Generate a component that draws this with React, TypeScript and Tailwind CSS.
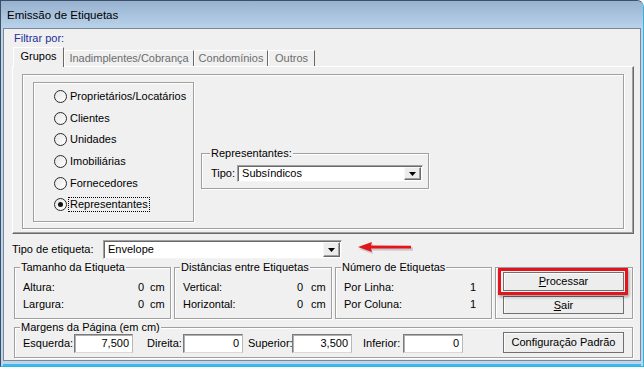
import React from 'react';

const font = "font-['Liberation_Sans',Arial,sans-serif]";

function GroupBox({ label, className = '', labelLeft = 'left-[5px]', children }: { label?: string; className?: string; labelLeft?: string; children?: React.ReactNode }) {
    return (
        <div className={`relative shrink-0 border border-[#a0a0a0] shadow-[inset_1px_1px_0_#fff,1px_1px_0_#fff] ${className}`}>
            {label && (
                <span className={`absolute -top-[7px] ${labelLeft} bg-[#f0f0f0] px-[1px] leading-[13px] whitespace-nowrap`}>{label}</span>
            )}
            {children}
        </div>
    );
}

function Radio({ label, checked = false, focused = false }: { label: string; checked?: boolean; focused?: boolean }) {
    return (
        <div className="h-[21.6px] flex items-center">
            <div className="w-[13px] h-[13px] rounded-full border-[1.5px] border-[#2a2a2a] bg-gradient-to-br from-[#e6e6e6] to-white flex items-center justify-center shrink-0">
                {checked && <div className="w-[5px] h-[5px] rounded-full bg-[#111]" />}
            </div>
            <span className={`ml-[2px] px-[1px] leading-[13px] ${focused ? 'outline outline-1 outline-dotted outline-black' : ''}`}>{label}</span>
        </div>
    );
}

function DropButton({ className = '' }: { className?: string }) {
    return (
        <div className={`h-full bg-[#ececec] border border-t-[#f8f8f8] border-l-[#f8f8f8] border-r-[#696969] border-b-[#696969] shadow-[inset_-1px_-1px_0_#a0a0a0] flex items-center justify-center ${className}`}>
            <svg width="7" height="4" viewBox="0 0 7 4"><path d="M0 0h7L3.5 4z" fill="#000" /></svg>
        </div>
    );
}

function Combo({ value, className = '' }: { value: string; className?: string }) {
    return (
        <div className={`shrink-0 bg-white border border-t-[#a0a0a0] border-l-[#a0a0a0] border-r-[#f4f4f4] border-b-[#f4f4f4] shadow-[inset_1px_1px_0_#696969] flex items-stretch p-[1px] pl-[2px] ${className}`}>
            <span className="flex-1 flex items-center pl-[2px]">{value}</span>
            <DropButton className="w-[17px]" />
        </div>
    );
}

function Field({ value, className = '' }: { value: string; className?: string }) {
    return (
        <div className={`shrink-0 h-[19px] bg-white border border-t-[#7a7a7a] border-l-[#7a7a7a] border-r-[#b8b8b8] border-b-[#d8d8d8] shadow-[inset_1px_1px_0_#b0b0b0] flex items-center justify-end pr-[3px] ${className}`}>
            {value}
        </div>
    );
}

function WinButton({ children, className = '' }: { children: React.ReactNode; className?: string }) {
    return (
        <div className={`shrink-0 bg-[#ededed] border border-[#707070] shadow-[inset_1px_1px_0_#fcfcfc] flex items-center justify-center ${className}`}>
            {children}
        </div>
    );
}

function InfoRow({ label, value, unit, valueClass = '' }: { label: string; value: string; unit?: string; valueClass?: string }) {
    return (
        <div className="h-[17px] flex items-center pl-[8px]">
            <span className="flex-1">{label}</span>
            <span className={valueClass}>{value}</span>
            {unit && <span className="ml-[6px] w-[20px]">{unit}</span>}
        </div>
    );
}

export default function App() {
    return (
        <div className={`w-[644px] h-[367px] flex flex-col bg-[#bcd4ec] border border-[#3d5066] border-r-[#2fb4e4] border-b-[#2fb4e4] rounded-tr-[7px] overflow-hidden text-[11px] leading-[13px] text-black ${font}`}>
            {/* title bar */}
            <div className="h-[27px] shrink-0 flex items-center pl-[6px] pt-[1px] bg-gradient-to-b from-[#97b2cf] to-[#bad2eb] text-[11.5px]">
                Emissão de Etiquetas
            </div>

            {/* client area */}
            <div className="ml-[2px] w-[638px] h-[333px] shrink-0 border border-[#7d8894] bg-[#f0f0f0] flex flex-col shadow-[0_3px_0_#bcd4ec,0_5px_0_#3bbbe8]">
                <div className="h-[18px] shrink-0 pl-[10px] pt-[3px] text-[#22319a]">Filtrar por:</div>

                {/* tabs */}
                <div className="h-[19px] shrink-0 ml-[9px] flex items-end relative z-10">
                    <div className="h-[20px] w-[51px] -mb-[1px] bg-[#f0f0f0] border-t border-l border-white border-r border-r-[#696969] flex items-center justify-center pb-[2px]">Grupos</div>
                    <div className="h-[16px] w-[130px] border-t border-l border-white border-r border-r-[#696969] flex items-center justify-center text-[#6d6d6d]">Inadimplentes/Cobrança</div>
                    <div className="h-[16px] w-[74px] border-t border-l border-white border-r border-r-[#696969] flex items-center justify-center text-[#6d6d6d]">Condomínios</div>
                    <div className="h-[16px] w-[47px] border-t border-l border-white border-r border-r-[#696969] flex items-center justify-center text-[#6d6d6d]">Outros</div>
                </div>

                {/* tab page */}
                <div className="ml-[8px] w-[622px] h-[168px] shrink-0 border border-t-white border-l-white border-r-[#696969] border-b-[#696969] shadow-[inset_-1px_-1px_0_#a0a0a0] pt-[7px] pl-[9px]">
                    <GroupBox className="w-[602px] h-[155px] flex items-start">
                        <GroupBox className="ml-[10px] mt-[7px] w-[161px] h-[140px] pt-[3px] pl-[20px]">
                            <Radio label="Proprietários/Locatários" />
                            <Radio label="Clientes" />
                            <Radio label="Unidades" />
                            <Radio label="Imobiliárias" />
                            <Radio label="Fornecedores" />
                            <Radio label="Representantes" checked focused />
                        </GroupBox>
                        <GroupBox label="Representantes:" labelLeft="left-[8px]" className="ml-[7px] mt-[78px] w-[228px] h-[36px] pt-[11px] pl-[9px] flex items-start">
                            <span className="h-[17px] flex items-center">Tipo:</span>
                            <Combo value="Subsíndicos" className="ml-[2px] w-[186px] h-[17px]" />
                        </GroupBox>
                    </GroupBox>
                </div>

                {/* tipo de etiqueta */}
                <div className="mt-[6px] h-[19px] shrink-0 pl-[8px] flex items-center">
                    <span className="w-[91px]">Tipo de etiqueta:</span>
                    <Combo value="Envelope" className="w-[239px] h-[19px]" />
                    <svg width="60" height="14" viewBox="0 0 60 14" className="ml-[14px] -mt-[4px]">
                        <path d="M3 8 L17 3 L16 6.5 L57 6.3 L57 9.7 L16 9.5 L17 13 Z" fill="#9a9a9a" opacity="0.45" />
                        <path d="M2 6 L16 1 L15 4.6 L55 4.8 L55 7.4 L15 7.6 L16 11 Z" fill="#e3141b" />
                    </svg>
                </div>

                {/* info groups */}
                <div className="mt-[8px] h-[52px] shrink-0 ml-[10px] flex gap-[3px]">
                    <GroupBox label="Tamanho da Etiqueta" className="w-[157px] h-[52px] pt-[11px]">
                        <InfoRow label="Altura:" value="0" unit="cm" />
                        <InfoRow label="Largura:" value="0" unit="cm" />
                    </GroupBox>
                    <GroupBox label="Distâncias entre Etiquetas" className="w-[158px] h-[52px] pt-[11px]">
                        <InfoRow label="Vertical:" value="0" unit="cm" valueClass="mr-[2px]" />
                        <InfoRow label="Horizontal:" value="0" unit="cm" valueClass="mr-[2px]" />
                    </GroupBox>
                    <GroupBox label="Número de Etiquetas" className="w-[157px] h-[52px] pt-[11px]">
                        <InfoRow label="Por Linha:" value="1" valueClass="mr-[15px]" />
                        <InfoRow label="Por Coluna:" value="1" valueClass="mr-[15px]" />
                    </GroupBox>
                    <GroupBox className="w-[138px] h-[52px] pt-[4px] pl-[7px]">
                        <div className="relative w-[121px]">
                            <WinButton className="w-[121px] h-[19px] border-[#4a4a4a]">
                                <span><span className="underline">P</span>rocessar</span>
                            </WinButton>
                            <div className="absolute -left-[5px] -top-[4px] -right-[4px] -bottom-[4px] border-[3px] border-[#e3141b] shadow-[1px_2px_3px_rgba(0,0,0,0.35)]" />
                        </div>
                        <WinButton className="mt-[5px] w-[121px] h-[18px]">
                            <span><span className="underline">S</span>air</span>
                        </WinButton>
                    </GroupBox>
                </div>

                {/* margens */}
                <GroupBox label="Margens da Página (em cm)" className="mt-[8px] ml-[10px] w-[619px] h-[31px] pt-[1px] pl-[8px] flex items-center">
                    <span className="w-[51px]">Esquerda:</span>
                    <Field value="7,500" className="w-[59px]" />
                    <span className="ml-[14px] w-[36px]">Direita:</span>
                    <Field value="0" className="w-[60px]" />
                    <span className="ml-[5px] w-[44px]">Superior:</span>
                    <Field value="3,500" className="w-[60px]" />
                    <span className="ml-[11px] w-[40px]">Inferior:</span>
                    <Field value="0" className="w-[60px]" />
                    <WinButton className="ml-[40px] -mt-[2px] w-[121px] h-[21px]">Configuração Padrão</WinButton>
                </GroupBox>
            </div>
        </div>
    );
}
